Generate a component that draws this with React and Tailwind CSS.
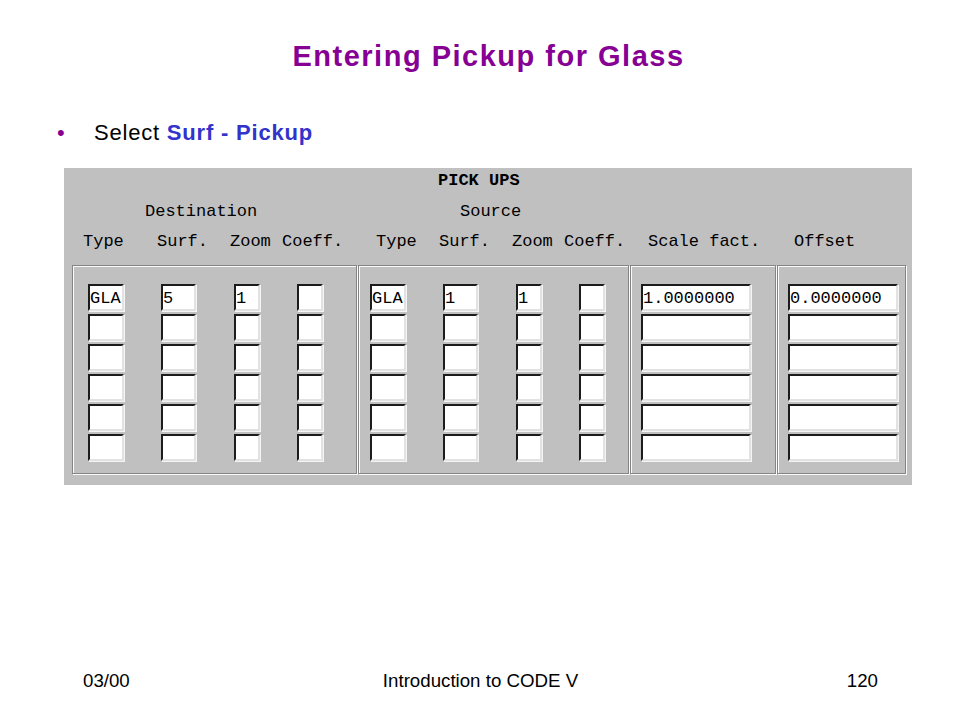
import React from "react";

const MONO = "font-['Liberation_Mono','Courier_New',monospace]";

const DEST_COLS = [
  { ml: "ml-[15px]", w: "w-[36px]", first: "GLA" },
  { ml: "ml-[37px]", w: "w-[35px]", first: "5" },
  { ml: "ml-[38px]", w: "w-[26px]", first: "1" },
  { ml: "ml-[37px]", w: "w-[26px]", first: "" },
];

const SRC_COLS = [
  { ml: "ml-[11px]", w: "w-[36px]", first: "GLA" },
  { ml: "ml-[37px]", w: "w-[35px]", first: "1" },
  { ml: "ml-[38px]", w: "w-[26px]", first: "1" },
  { ml: "ml-[37px]", w: "w-[26px]", first: "" },
];

function Field({ value, w }) {
  return (
    <div
      className={`${w} h-[27px] bg-white border-2 border-t-[#1c1c1c] border-l-[#1c1c1c] border-b-[#e2e2e2] border-r-[#e2e2e2] shadow-[1px_1px_0_#f4f4f4] flex items-center pt-[3px] text-[17px] leading-[20px] overflow-hidden whitespace-nowrap`}
    >
      {value}
    </div>
  );
}

function Column({ ml, w, first }) {
  return (
    <div className={`${ml} flex flex-col gap-[3px]`}>
      {[first, "", "", "", "", ""].map((v, i) => (
        <Field key={i} value={v} w={w} />
      ))}
    </div>
  );
}

function Group({ width, cols }) {
  return (
    <div className={`${width} h-[209px] border border-[#858585] shadow-[inset_1px_1px_0_#fafafa,1px_1px_0_#fafafa] flex pt-[18px]`}>
      {cols.map((c, i) => (
        <Column key={i} {...c} />
      ))}
    </div>
  );
}

function PickUps() {
  return (
    <div className={`ml-[64px] mt-[21px] w-[848px] h-[317px] bg-[#c0c0c0] text-black ${MONO}`}>
      <div className="h-[29px] flex items-center pb-[4px] pl-[374px] text-[17px] font-bold">PICK UPS</div>
      <div className="h-[30px] flex items-center text-[17px]">
        <span className="ml-[81px] w-[315px]">Destination</span>
        <span>Source</span>
      </div>
      <div className="h-[30px] flex items-center text-[17px] whitespace-nowrap">
        <span className="ml-[19px] w-[74px]">Type</span>
        <span className="w-[73px]">Surf.</span>
        <span className="w-[52px]">Zoom</span>
        <span className="w-[94px]">Coeff.</span>
        <span className="w-[63px]">Type</span>
        <span className="w-[73px]">Surf.</span>
        <span className="w-[52px]">Zoom</span>
        <span className="w-[84px]">Coeff.</span>
        <span className="w-[146px]">Scale fact.</span>
        <span>Offset</span>
      </div>
      <div className="mt-[8px] flex gap-[1px] pl-[8px]">
        <Group width="w-[285px]" cols={DEST_COLS} />
        <Group width="w-[271px]" cols={SRC_COLS} />
        <Group width="w-[146px]" cols={[{ ml: "ml-[10px]", w: "w-[110px]", first: "1.0000000" }]} />
        <Group width="w-[129px]" cols={[{ ml: "ml-[10px]", w: "w-[110px]", first: "0.0000000" }]} />
      </div>
    </div>
  );
}

export default function App() {
  return (
    <div className="w-[960px] h-[720px] bg-white flex flex-col font-['Liberation_Sans',Arial,sans-serif] text-black">
      <h1 className="mt-[38px] h-[36px] pl-[17px] text-center text-[29px] leading-[36px] font-bold tracking-[1.5px] text-[#870094]">
        Entering Pickup for Glass
      </h1>

      <div className="mt-[45px] h-[28px] flex items-center text-[22px] leading-[28px] tracking-[0.8px]">
        <span className="ml-[57px] w-[37px] text-[#870094]">•</span>
        <span>
          Select <span className="font-bold text-[#3333cc]">Surf - Pickup</span>
        </span>
      </div>

      <PickUps />

      <div className="mt-auto mb-[27px] h-[24px] grid grid-cols-3 items-center pl-[83px] pr-[82px] text-[18.7px] leading-[24px]">
        <span>03/00</span>
        <span className="text-center whitespace-nowrap">Introduction to CODE V</span>
        <span className="text-right">120</span>
      </div>
    </div>
  );
}
